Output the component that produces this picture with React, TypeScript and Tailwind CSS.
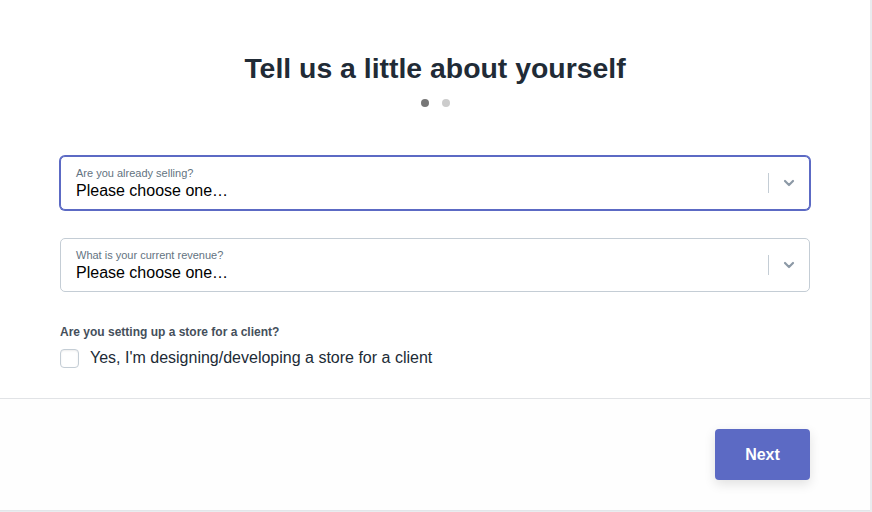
import { ChevronDown } from "lucide-react";

function SelectField({ label, focused }: { label: string; focused?: boolean }) {
    return (
        <div
            className={
                focused
                    ? "flex items-center h-[54px] rounded-[5px] border border-[#5c6ac4] shadow-[0_0_0_1px_#5c6ac4] bg-white"
                    : "flex items-center h-[54px] rounded-[5px] border border-[#c4cdd5] bg-white"
            }
        >
            <div className="flex-1 pl-[15px] pt-[1px]">
                <div className="text-[11px] leading-[13px] text-[#637381]">{label}</div>
                <div className="text-[16px] leading-[20px] text-black mt-[1px]">Please choose one…</div>
            </div>
            <div className="w-px h-[20px] bg-[#c4cdd5]" />
            <div className="w-[40px] flex justify-center">
                <ChevronDown className="w-[16px] h-[16px] text-[#8c99a6]" strokeWidth={3.25} />
            </div>
        </div>
    );
}

export default function App() {
    return (
        <div className="w-full h-[512px] bg-[#e9ecef] font-['Liberation_Sans',Arial,sans-serif]">
            <div className="w-[870px] h-[511px] bg-white border-b border-[#e3e6ea] flex flex-col">
                <div className="px-[60px] pt-[52px] h-[399px] border-b border-[#e1e3e6]">
                    <h1 className="text-[28.4px] leading-[32px] font-bold text-center text-[#212b36]">
                        Tell us a little about yourself
                    </h1>
                    <div className="flex justify-center gap-[13px] mt-[15px] pl-[1px]">
                        <span className="w-[8px] h-[8px] rounded-full bg-[#777]" />
                        <span className="w-[8px] h-[8px] rounded-full bg-[#ccc]" />
                    </div>
                    <div className="mt-[49px]">
                        <SelectField label="Are you already selling?" focused />
                    </div>
                    <div className="mt-[28px]">
                        <SelectField label="What is your current revenue?" />
                    </div>
                    <div className="mt-[32px] text-[12px] leading-[16px] font-bold text-[#454f5b]">
                        Are you setting up a store for a client?
                    </div>
                    <label className="flex items-center gap-[11px] mt-[8px]">
                        <span className="w-[19px] h-[19px] rounded-[4px] border border-[#c4cdd5] bg-white shadow-[inset_0_1px_2px_rgba(0,0,0,0.08)]" />
                        <span className="text-[16px] leading-[20px] text-[#212b36]">
                            Yes, I'm designing/developing a store for a client
                        </span>
                    </label>
                </div>
                <div className="flex-1 bg-[#fefefe] flex justify-end items-start pt-[30px] pr-[60px]">
                    <button className="w-[95px] h-[51px] rounded-[4px] bg-[#5c6ac4] text-white text-[16px] font-bold shadow-[0_4px_12px_rgba(0,0,0,0.12)]">
                        Next
                    </button>
                </div>
            </div>
        </div>
    );
}
